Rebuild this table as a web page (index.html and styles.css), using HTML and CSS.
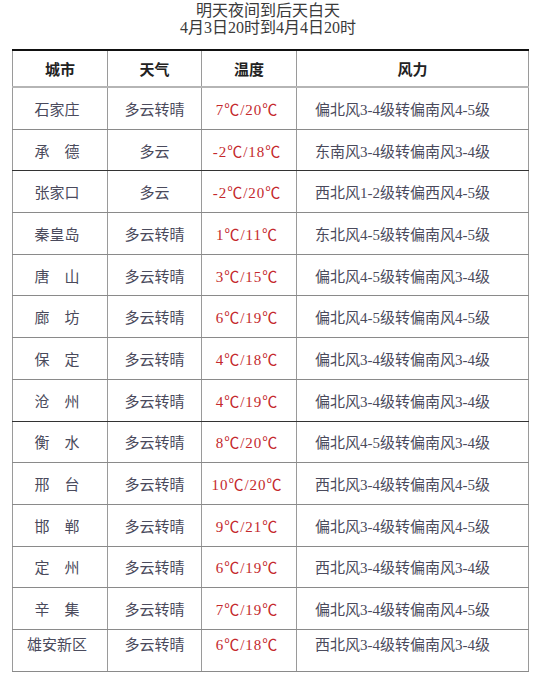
FILE: index.html
```html
<!DOCTYPE html>
<html lang="zh-CN">
<head>
<meta charset="utf-8">
<link rel="stylesheet" href="styles.css">
</head>
<body>
<div class="title">
  <div class="t1">明天夜间到后天白天</div>
  <div class="t2">4月3日20时到4月4日20时</div>
</div>
<table class="wx">
  <colgroup>
    <col class="c1"><col class="c2"><col class="c3"><col class="c4">
  </colgroup>
  <thead>
    <tr><th>城市</th><th class="b2">天气</th><th class="b3">温度</th><th class="b4 hw">风力</th></tr>
  </thead>
  <tbody>
    <tr><td>石家庄</td><td class="b2">多云转晴</td><td class="b3 t">7℃/20℃</td><td class="b4">偏北风3-4级转偏南风4-5级</td></tr>
    <tr class="dk"><td>承　德</td><td class="b2">多云</td><td class="b3 t">-2℃/18℃</td><td class="b4">东南风3-4级转偏南风3-4级</td></tr>
    <tr><td>张家口</td><td class="b2">多云</td><td class="b3 t">-2℃/20℃</td><td class="b4">西北风1-2级转偏西风4-5级</td></tr>
    <tr><td>秦皇岛</td><td class="b2">多云转晴</td><td class="b3 t">1℃/11℃</td><td class="b4">东北风4-5级转偏南风4-5级</td></tr>
    <tr><td>唐　山</td><td class="b2">多云转晴</td><td class="b3 t">3℃/15℃</td><td class="b4">偏北风4-5级转偏南风3-4级</td></tr>
    <tr><td>廊　坊</td><td class="b2">多云转晴</td><td class="b3 t">6℃/19℃</td><td class="b4">偏北风4-5级转偏南风4-5级</td></tr>
    <tr><td>保　定</td><td class="b2">多云转晴</td><td class="b3 t">4℃/18℃</td><td class="b4">偏北风3-4级转偏南风3-4级</td></tr>
    <tr class="dk"><td>沧　州</td><td class="b2">多云转晴</td><td class="b3 t">4℃/19℃</td><td class="b4">偏北风3-4级转偏南风3-4级</td></tr>
    <tr><td>衡　水</td><td class="b2">多云转晴</td><td class="b3 t">8℃/20℃</td><td class="b4">偏北风4-5级转偏南风3-4级</td></tr>
    <tr><td>邢　台</td><td class="b2">多云转晴</td><td class="b3 t">10℃/20℃</td><td class="b4">西北风3-4级转偏南风4-5级</td></tr>
    <tr><td>邯　郸</td><td class="b2">多云转晴</td><td class="b3 t">9℃/21℃</td><td class="b4">偏北风3-4级转偏南风4-5级</td></tr>
    <tr><td>定　州</td><td class="b2">多云转晴</td><td class="b3 t">6℃/19℃</td><td class="b4">西北风3-4级转偏南风3-4级</td></tr>
    <tr><td>辛　集</td><td class="b2">多云转晴</td><td class="b3 t">7℃/19℃</td><td class="b4">偏北风3-4级转偏南风4-5级</td></tr>
    <tr><td>雄安新区</td><td class="b2">多云转晴</td><td class="b3 t">6℃/18℃</td><td class="b4">西北风3-4级转偏南风3-4级</td></tr>
  </tbody>
</table>
</body>
</html>
```
FILE: styles.css
```css
html, body {
  margin: 0;
  padding: 0;
  background: #ffffff;
}
body {
  font-family: "Liberation Serif", "Noto Sans CJK SC", serif;
  color: #4a4a5c;
}
.title {
  padding-top: 3px;
  text-align: center;
  color: #3a3a3a;
  font-size: 16px;
  line-height: 16px;
}
.title .t2 {
  margin-top: 1px;
}
.wx {
  margin: 13px 0 0 12px;
  width: 516px;
  border-collapse: collapse;
  table-layout: fixed;
  font-size: 15px;
}
.c1 { width: 95px; }
.c2 { width: 94px; }
.c3 { width: 95px; }
.c4 { width: 232px; }
.wx th, .wx td {
  padding: 0;
  text-align: center;
  border-left: 1px solid #9a9a9a;
  border-right: 1px solid #9a9a9a;
  border-bottom: 1px solid #8a8a8a;
}
.wx th {
  height: 35px;
  border-top: 2px solid #111111;
  border-bottom: 2px solid #b5b5b5;
  color: #222222;
  font-weight: bold;
  font-size: 15px;
}
.wx td {
  height: 40.7px;
}
.wx td:first-child {
  padding-right: 6px;
}
.wx .b2, .wx .b3 {
  border-left: 1px solid #1a1a1a;
}
.wx .b4 {
  border-left: 1px solid #8a8a8a;
}
.wx td.b4 {
  text-align: left;
  padding-left: 18px;
}
.wx .t {
  color: #c4282c;
  letter-spacing: 1px;
  padding-right: 4px;
}
.wx tr.dk td {
  border-bottom: 1px solid #333333;
}
.wx tbody tr:last-child td {
  vertical-align: top;
  padding-top: 3px;
  height: 37.7px;
}
```
